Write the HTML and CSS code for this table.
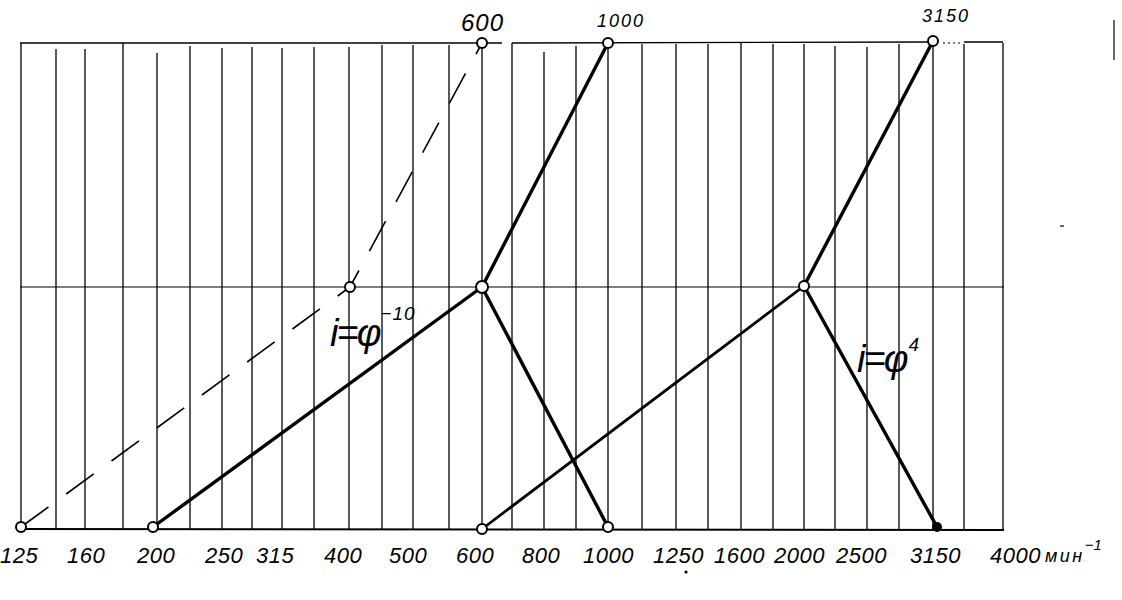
FILE: index.html
```html
<!DOCTYPE html>
<html lang="ru">
<head>
<meta charset="utf-8">
<title>График частот вращения</title>
<link rel="stylesheet" href="styles.css">
</head>
<body>
<svg class="chart" width="1122" height="600" viewBox="0 0 1122 600" xmlns="http://www.w3.org/2000/svg">
  <!-- vertical grid -->
  <g class="grid">
    <line x1="21" y1="43" x2="21" y2="529"/>
    <line x1="56" y1="49" x2="56" y2="529"/>
    <line x1="85" y1="49" x2="85" y2="529"/>
    <line x1="123" y1="43" x2="123" y2="529"/>
    <line x1="157" y1="53" x2="157" y2="529"/>
    <line x1="190" y1="46" x2="190" y2="529"/>
    <line x1="222" y1="48" x2="222" y2="529"/>
    <line x1="252" y1="47" x2="252" y2="529"/>
    <line x1="282" y1="48" x2="282" y2="529"/>
    <line x1="314" y1="47" x2="314" y2="529"/>
    <line x1="349" y1="47" x2="349" y2="529"/>
    <line x1="382" y1="45" x2="382" y2="529"/>
    <line x1="413" y1="45" x2="413" y2="529"/>
    <line x1="449" y1="45" x2="449" y2="529"/>
    <line x1="482" y1="43" x2="482" y2="529"/>
    <line x1="512" y1="43" x2="512" y2="529"/>
    <line x1="544" y1="52" x2="544" y2="529"/>
    <line x1="576" y1="46" x2="576" y2="529"/>
    <line x1="608" y1="43" x2="608" y2="529"/>
    <line x1="642" y1="44" x2="642" y2="529"/>
    <line x1="676" y1="44" x2="676" y2="529"/>
    <line x1="708" y1="44" x2="708" y2="529"/>
    <line x1="741" y1="43" x2="741" y2="529"/>
    <line x1="773" y1="44" x2="773" y2="529"/>
    <line x1="804" y1="44" x2="804" y2="529"/>
    <line x1="835" y1="46" x2="835" y2="529"/>
    <line x1="867" y1="47" x2="867" y2="529"/>
    <line x1="899" y1="44" x2="899" y2="529"/>
    <line x1="933" y1="44" x2="933" y2="529"/>
    <line x1="964" y1="44" x2="964" y2="529"/>
    <line x1="1003" y1="43" x2="1003" y2="530"/>
  </g>

  <!-- horizontal lines -->
  <g class="hline">
    <line x1="20" y1="43" x2="502" y2="43"/>
    <line x1="512" y1="43" x2="930" y2="42"/>
    <line class="faint" x1="943" y1="43" x2="962" y2="43"/>
    <line x1="964" y1="42" x2="1003" y2="42"/>
    <line class="mid" x1="20" y1="287" x2="1004" y2="287"/>
    <line class="base" x1="18" y1="529" x2="1004" y2="530"/>
  </g>

  <!-- dashed ray -->
  <polyline class="dash" points="21,527 350,287 482,43"/>

  <!-- thick rays -->
  <g class="ray">
    <line x1="153" y1="527" x2="482" y2="287"/>
    <line x1="482" y1="287" x2="608" y2="43"/>
    <line x1="482" y1="287" x2="608" y2="527"/>
    <line class="thin" x1="482" y1="529" x2="804" y2="286"/>
    <line x1="804" y1="286" x2="933" y2="41"/>
    <line x1="804" y1="286" x2="937" y2="527"/>
  </g>

  <!-- nodes -->
  <g class="node">
    <circle cx="482" cy="43" r="5"/>
    <circle cx="608" cy="43" r="5"/>
    <circle cx="933" cy="41" r="5"/>
    <circle cx="350" cy="287" r="5"/>
    <circle cx="482" cy="287" r="6"/>
    <circle cx="804" cy="286" r="5"/>
    <circle cx="21" cy="527" r="5"/>
    <circle cx="153" cy="527" r="5"/>
    <circle cx="482" cy="529" r="5"/>
    <circle cx="608" cy="527" r="5"/>
    <circle class="filled" cx="937" cy="527" r="4"/>
  </g>

  <!-- top labels -->
  <g class="lbl">
    <text class="big" x="461" y="31">600</text>
    <text class="small" x="597" y="27">1000</text>
    <text class="small" x="922" y="22">3150</text>
  </g>

  <!-- bottom scale -->
  <g class="lbl">
    <text x="0" y="563">125</text>
    <text x="67" y="563">160</text>
    <text x="137" y="563">200</text>
    <text x="205" y="563">250</text>
    <text x="256" y="563">315</text>
    <text x="324" y="563">400</text>
    <text x="389" y="563">500</text>
    <text x="456" y="563">600</text>
    <text x="522" y="563">800</text>
    <text x="583" y="563">1000</text>
    <text x="653" y="563">1250</text>
    <text x="714" y="563">1600</text>
    <text x="774" y="563">2000</text>
    <text x="836" y="563">2500</text>
    <text x="910" y="563">3150</text>
    <text x="990" y="563">4000</text>
    <text class="unit" x="1045" y="562">мин<tspan class="sup" dx="0" dy="-12">−1</tspan></text>
  </g>

  <!-- ratio labels -->
  <text class="ratio" x="330" y="346">i=φ<tspan class="exp" dx="1" dy="-26">−10</tspan></text>
  <text class="ratio" x="857" y="372">i=φ<tspan class="exp" dx="2" dy="-21">4</tspan></text>

  <!-- scan specks -->
  <line class="speck" x1="1114" y1="20" x2="1114" y2="60"/>
  <line class="speck" x1="1060" y1="226" x2="1064" y2="226"/>
  <circle class="dot" cx="686" cy="572" r="1.6"/>
</svg>
</body>
</html>
```

FILE: styles.css
```css
html, body {
  margin: 0;
  padding: 0;
  background: #ffffff;
}

.chart {
  display: block;
  background: #ffffff;
}

.grid line {
  stroke: #000;
  stroke-width: 1.3;
}

.hline line {
  stroke: #000;
  stroke-width: 1.4;
}

.hline .faint {
  stroke-dasharray: 2 3;
  stroke-width: 1;
}

.hline .mid {
  stroke-width: 1.2;
}

.hline .base {
  stroke-width: 2.2;
}

.dash {
  fill: none;
  stroke: #000;
  stroke-width: 1.6;
  stroke-dasharray: 34 22;
}

.ray line {
  stroke: #000;
  stroke-width: 3.4;
  stroke-linecap: round;
}

.ray .thin {
  stroke-width: 2.8;
}

.node circle {
  fill: #fff;
  stroke: #000;
  stroke-width: 2;
}

.node .filled {
  fill: #000;
}

.lbl text {
  font-family: "Liberation Sans", Arial, sans-serif;
  font-style: italic;
  font-size: 22px;
  letter-spacing: 0.5px;
  fill: #000;
}

.lbl .big {
  font-size: 24px;
  letter-spacing: 1px;
}

.lbl .small {
  font-size: 18px;
  letter-spacing: 2px;
}

.lbl .unit {
  font-size: 18px;
  letter-spacing: 2.5px;
}

.lbl .sup {
  font-size: 15px;
  letter-spacing: 0;
}

.ratio {
  font-family: "Liberation Sans", Arial, sans-serif;
  font-style: italic;
  font-size: 38px;
  letter-spacing: -2px;
  fill: #000;
}

.ratio .exp {
  font-size: 19px;
  letter-spacing: 1px;
}

.speck {
  stroke: #000;
  stroke-width: 1.2;
}

.dot {
  fill: #000;
}
```
